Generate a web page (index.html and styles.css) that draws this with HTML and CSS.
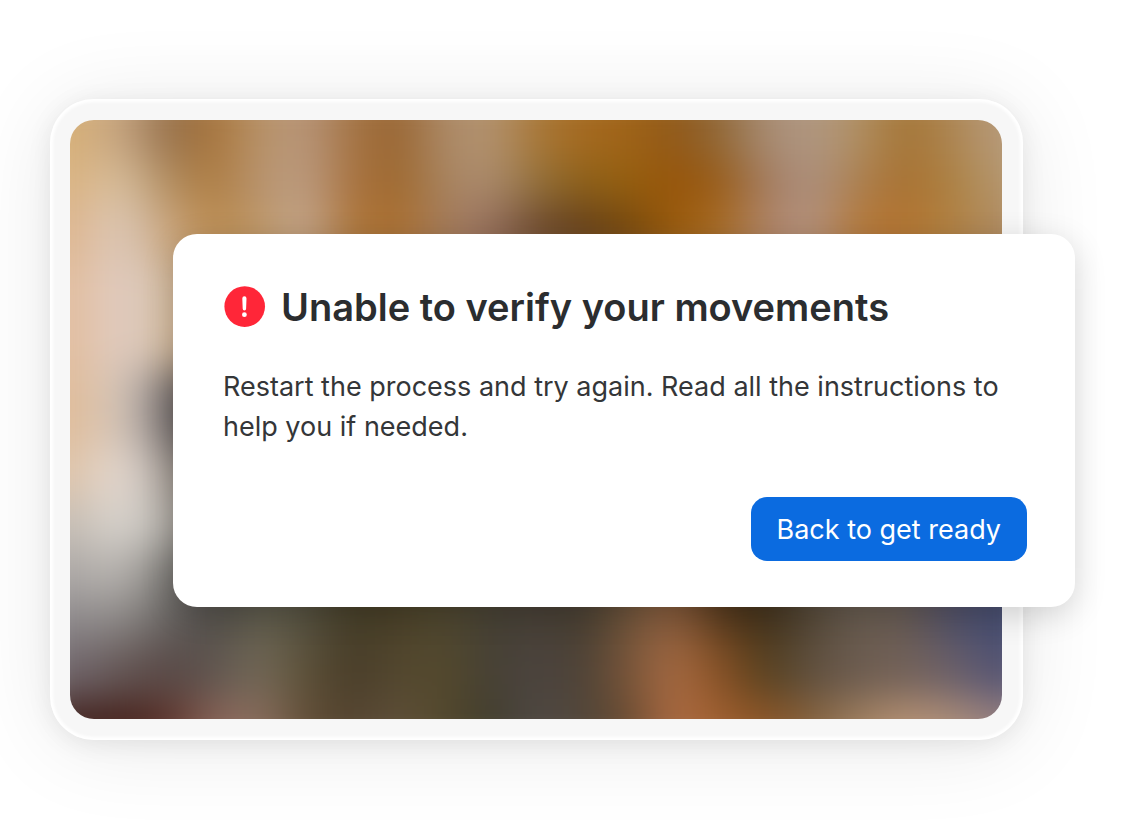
FILE: index.html
```html
<!DOCTYPE html>
<html lang="en">
<head>
    <meta charset="UTF-8">
    <meta name="viewport" content="width=device-width, initial-scale=1.0">
    <title>Unable to verify your movements</title>
    <link rel="stylesheet" href="styles.css">
</head>
<body>
    <main class="stage">
        <div class="frame">
            <div class="preview">
                <!-- Blurred camera feed, one band per strip of the picture -->
                <div class="scene" aria-hidden="true">
                    <div class="band band-1"></div>
                    <div class="band band-2"></div>
                    <div class="band band-3"></div>
                    <div class="band band-4"></div>
                    <div class="band band-5"></div>
                    <div class="band band-6"></div>
                    <div class="band band-7"></div>
                    <div class="band band-8"></div>
                    <div class="band band-9"></div>
                    <div class="band band-10"></div>
                    <div class="band band-11"></div>
                </div>
            </div>
        </div>

        <section class="dialog" role="alertdialog" aria-labelledby="dialogTitle" aria-describedby="dialogText">
            <div class="dialog-header">
                <svg class="alert-icon" viewBox="0 0 42 42" aria-hidden="true">
                    <circle cx="21.7" cy="20.6" r="20.3" fill="#ff2638"/>
                    <path d="M19.3 12.4a2.1 2.1 0 0 1 4.2 0l-.4 10.3a1.7 1.7 0 0 1-3.4 0z" fill="#fff"/>
                    <circle cx="21.4" cy="28.7" r="2.4" fill="#fff"/>
                </svg>
                <h1 id="dialogTitle">Unable to verify your movements</h1>
            </div>
            <p id="dialogText">Restart the process and try again. Read all the instructions to help you if needed.</p>
            <div class="dialog-actions">
                <button type="button">Back to get ready</button>
            </div>
        </section>
    </main>
</body>
</html>
```
FILE: styles.css
```css
* {
    box-sizing: border-box;
}

body {
    margin: 0;
    font-family: Inter, "Liberation Sans", sans-serif;
    background: #fff;
    color: #2b2d2f;
}

.stage {
    position: relative;
    padding: 99px 98px 99px 50px;
    overflow: hidden;
}

.frame {
    padding: 21px 21px 21px 20px;
    border-radius: 44px;
    background: #f7f7f7;
    box-shadow: inset 0 0 3px 3px #fff, 0 4px 24px rgba(0, 0, 0, 0.08), 0 6px 90px rgba(0, 0, 0, 0.09);
}

.preview {
    position: relative;
    aspect-ratio: 932 / 599;
    border-radius: 24px;
    overflow: hidden;
}

.scene {
    position: absolute;
    inset: -40px;
    display: grid;
    grid-template-rows: 80fr 45fr 55fr 110fr 80fr 50fr 50fr 50fr 45fr 55fr 60fr;
    filter: blur(20px);
}

.band-1 {
    background: linear-gradient(90deg, #d8b070, #d6b07a, #c6a684, #94704c, #a8743a, #b8946a, #b8967c, #a47444, #986430, #ac8a68, #b39472, #a87838, #a56a20, #a06418, #905818, #906838, #a88c74, #b09884, #b09064, #a47434, #ac8450, #b69a7a, #b69a7a);
}

.band-2 {
    background: linear-gradient(90deg, #d8b07c, #dab484, #d8c0a0, #b08c60, #ae7c40, #b89470, #bc9c82, #a87240, #9e682c, #a88460, #ac8c70, #92703c, #8c6018, #96600f, #985408, #985c18, #a47c60, #ac9080, #ac8050, #a87030, #ac8040, #b4966c, #b4967a);
}

.band-3 {
    background: linear-gradient(90deg, #dcb080, #deb894, #dccabc, #c8a47c, #bc8c50, #be9868, #c4a890, #ac7438, #ac7030, #a47c5c, #967060, #6c4a30, #64401c, #74480e, #9c5c0c, #a86c24, #b08468, #b49482, #b47838, #b47430, #b08040, #b08c60, #ac8c70);
}

/* The dialog covers the rest of bands 4 to 7 */
.band-4 {
    background: linear-gradient(90deg, #e0b894, #e2c0a4, #e0cec6, #d0b898, #b48458, #a07850 24%);
}

.band-5 {
    background: linear-gradient(90deg, #e0b48c, #e0c0a0, #d2c6be, #645e5e, #403838, #403838 24%);
}

.band-6 {
    background: linear-gradient(90deg, #e0bc98, #dec8b2, #e6dcd6, #989088, #605850, #605850 24%);
}

.band-7 {
    background: linear-gradient(90deg, #c0b8ac, #c8c0b8, #dcd8d2, #a8a49e, #605850, #605850 24%);
}

.band-8 {
    background: linear-gradient(90deg, #a8a4a0, #aca8a6, #bab6b2, #787672, #484644, #505048, #504c3c, #403a24, #403a24, #484028, #443c30, #443c30, #403a30, #60503a, #80583a, #402c18, #382c18, #584c40, #605850, #605850, #504c60, #444a68, #444a68);
}

.band-9 {
    background: linear-gradient(90deg, #8c888c, #8c888a, #8c8886, #64605e, #504c48, #64604e, #545040, #443c26, #4a4028, #504830, #444034, #484038, #443c30, #70543a, #906040, #5c3c1c, #40301a, #544838, #685c50, #685a50, #505068, #444c70, #444c70);
}

.band-10 {
    background: linear-gradient(90deg, #746a70, #70666c, #645654, #584846, #605650, #746a58, #5c5038, #483c28, #544830, #54492c, #464034, #4c4440, #4c4236, #785438, #a86c44, #885024, #54401e, #605040, #6c5c50, #746258, #6c6068, #545474, #545474);
}

.band-11 {
    background: linear-gradient(90deg, #402828, #442420, #44201a, #5c322a, #8c6458, #8c7060, #604c34, #544430, #60503a, #54492c, #403c2c, #504a46, #50463a, #684a30, #b06c44, #a06030, #8c5424, #84623e, #a08060, #b89274, #b09078, #988080, #908088);
}

.dialog {
    position: absolute;
    top: 234px;
    left: 173px;
    right: 46px;
    padding: 48px 48px 46px 50px;
    border-radius: 24px;
    background: #fff;
    box-shadow: 0 8px 32px rgba(0, 0, 0, 0.16);
}

.dialog-header {
    display: flex;
    align-items: center;
    gap: 16px;
}

.alert-icon {
    width: 42px;
    height: 42px;
    flex-shrink: 0;
    overflow: visible;
}

h1 {
    margin: 0;
    font-size: 38px;
    font-weight: 600;
    line-height: 50px;
}

p {
    margin: 35px 0 50px;
    color: #343638;
    font-size: 27px;
    line-height: 40px;
}

.dialog-actions {
    display: flex;
    justify-content: flex-end;
}

button {
    height: 64px;
    padding: 0 26px;
    border: none;
    border-radius: 16px;
    background: #0b6be0;
    color: #fff;
    font-family: inherit;
    font-size: 27px;
    cursor: pointer;
}

button:hover {
    background: #095cc2;
}
```
